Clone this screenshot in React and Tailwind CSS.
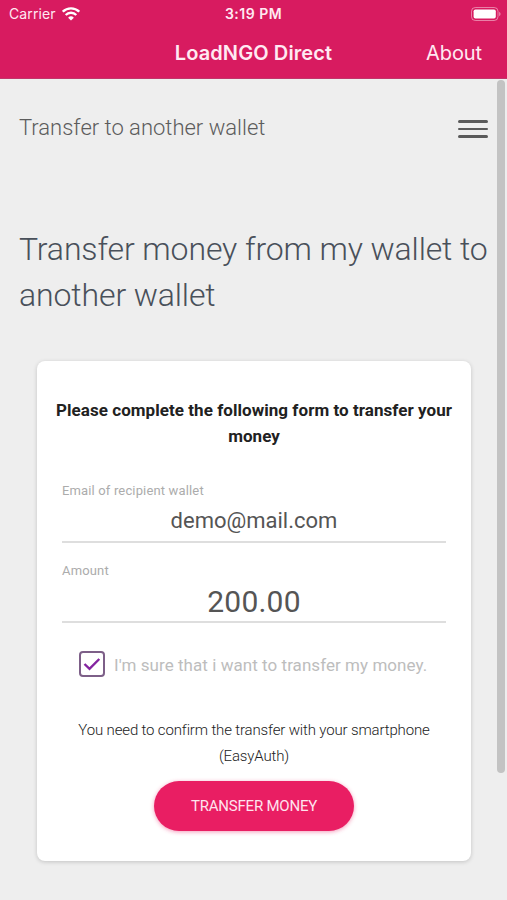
import React from 'react';

const WifiIcon = () => (
  <svg viewBox="0 0 18 14" className="w-[18px] h-[14px]" fill="none" stroke="#fff" strokeWidth="2.3">
    <path d="M0.8 4.7 A11.6 11.6 0 0 1 17.2 4.7" />
    <path d="M3.7 8 A7.4 7.4 0 0 1 14.3 8" />
    <path d="M9 13.6 L6.1 10.7 A4.1 4.1 0 0 1 11.9 10.7 Z" fill="#fff" stroke="none" />
  </svg>
);

const BatteryIcon = () => (
  <svg viewBox="0 0 30 14" className="w-[30px] h-[14px]" fill="none">
    <rect x="0.5" y="0.5" width="26.5" height="13" rx="3.8" stroke="#fff" strokeOpacity="0.45" />
    <rect x="2.6" y="2.4" width="22.2" height="9.2" rx="1.8" fill="#fff" />
    <path d="M28.2 4.8 C30 5.6 30 8.4 28.2 9.2 Z" fill="#fff" fillOpacity="0.5" />
  </svg>
);

const Header = () => (
  <header className="h-[79px] bg-[#d81b60] border-b border-[#c2356a] text-[#ffe9f2] font-['Inter',sans-serif]">
    {/* Status Bar */}
    <div className="grid grid-cols-3 items-center h-[27px] pl-[9px] pr-[6px]">
      <div className="flex items-center gap-[6px]">
        <span className="text-[14px] tracking-[0.1px]">Carrier</span>
        <WifiIcon />
      </div>
      <span className="pr-[3px] text-center text-[14px] font-semibold tracking-[0.5px] whitespace-nowrap">3:19 PM</span>
      <div className="flex justify-end">
        <BatteryIcon />
      </div>
    </div>

    {/* Navigation Bar */}
    <div className="grid grid-cols-[1fr_auto_1fr] items-center h-[51px] pr-[25px] pl-[25px]">
      <span />
      <h1 className="text-[20px] font-semibold tracking-[0.1px] whitespace-nowrap">LoadNGO Direct</h1>
      <button className="justify-self-end text-[20px] tracking-[-0.1px]">About</button>
    </div>
  </header>
);

const Field = ({ label, value, className }) => (
  <div className="h-[61px] border-b-2 border-[#dedede] text-center">
    <label className="block text-left text-[13px] leading-[18px] tracking-[0.15px] text-[#acacac]">{label}</label>
    <div className={className}>{value}</div>
  </div>
);

const App = () => {
  return (
    <div className="relative h-[900px] w-[507px] overflow-hidden bg-[#eeeeee] font-['Roboto',sans-serif]">
      <Header />

      {/* Page Title */}
      <div className="flex items-center justify-between h-[98px] pl-[19px] pr-[19px]">
        <h2 className="pb-[2px] text-[22px] font-light text-[#5c5c5c] whitespace-nowrap">Transfer to another wallet</h2>
        <button aria-label="Menu" className="flex flex-col gap-[5px] w-[30px] pt-[2px]">
          <span className="h-[2.4px] rounded-full bg-[#5a5a5a]" />
          <span className="h-[2.4px] rounded-full bg-[#5a5a5a]" />
          <span className="h-[2.4px] rounded-full bg-[#5a5a5a]" />
        </button>
      </div>

      <div className="h-[184px] pt-[49px] pl-[19px] text-[32px] leading-[46px] tracking-[-0.12px] font-light text-[#49505a]">
        <p className="whitespace-nowrap">Transfer money from my wallet to</p>
        <p>another wallet</p>
      </div>

      {/* Transfer Form */}
      <main className="w-[434px] h-[500px] ml-[37px] pt-[36px] px-[15px] rounded-[8px] bg-white text-center shadow-[0_1px_4px_rgba(0,0,0,0.18)]">
        <h3 className="h-[85px] text-[17px] leading-[26px] tracking-[0.05px] font-bold text-[#212121]">
          <span className="block whitespace-nowrap">Please complete the following form to transfer your</span>
          <span className="block">money</span>
        </h3>

        <div className="mx-[10px] flex flex-col gap-[19px]">
          <Field label="Email of recipient wallet" value="demo@mail.com" className="pt-[6px] text-[22px] leading-[30px] text-[#555]" />
          <Field label="Amount" value="200.00" className="pt-[2px] text-[30px] leading-[40px] tracking-[0.2px] text-[#555]" />
        </div>

        <div className="flex items-center h-[50px] mt-[16px] pl-[27px] gap-[9px]">
          <span className="flex items-center justify-center w-[26px] h-[26px] rounded-[4px] border-2 border-[#7d5f88]">
            <svg viewBox="0 0 18 14" className="w-[18px] h-[14px]" fill="none" stroke="#8424a0" strokeWidth="2.4">
              <path d="M1.5 7 L6.5 11.8 L16.3 2" />
            </svg>
          </span>
          <span className="pt-[3px] text-[17px] tracking-[0.05px] text-[#bdbdbd] whitespace-nowrap">I'm sure that i want to transfer my money.</span>
        </div>

        <p className="pt-[28px] text-[15px] leading-[26px] tracking-[-0.15px] font-light text-[#222]">
          <span className="block whitespace-nowrap">You need to confirm the transfer with your smartphone</span>
          <span className="block">(EasyAuth)</span>
        </p>

        <button className="w-[200px] h-[50px] mt-[12px] rounded-full bg-[#e91e63] text-[15px] tracking-[-0.2px] text-[#ffe3ee] shadow-[0_1px_4px_rgba(233,30,99,0.45)]">
          TRANSFER MONEY
        </button>
      </main>

      {/* Scroll Indicator */}
      <div className="absolute top-[80px] right-[2px] w-[8px] h-[693px] rounded-full bg-[#c3c3c3]" />
    </div>
  );
};

export default App;
